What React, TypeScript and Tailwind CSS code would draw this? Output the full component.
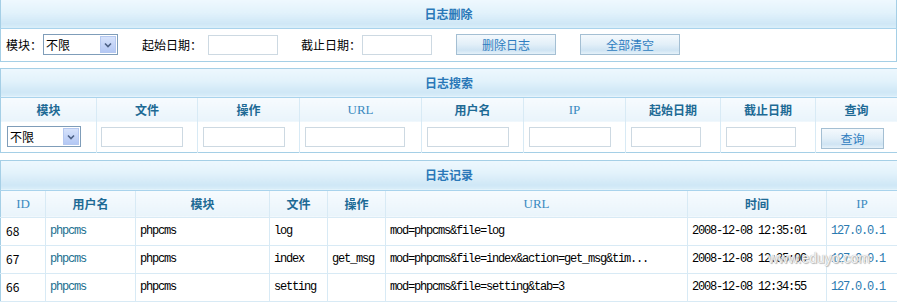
import React from 'react';

const cn = '"Noto Sans CJK SC", "Noto Sans", sans-serif';

// header band gradient used on every table title row
const bandCls =
  'bg-[linear-gradient(to_bottom,#eef8fe_0%,#e2f2fb_45%,#cfe7f6_85%,#d9eef9_100%)] border-b border-[#a9d3ec] text-center font-bold text-[12px] text-[#2a78b8]';
const colHeadCls =
  'bg-[linear-gradient(to_bottom,#f7fbfe,#e9f4fb)] border-r border-[#d8eaf5] text-center font-bold text-[12px] text-[#1d6a95]';
const latinHead = 'font-["Liberation_Serif"] font-normal text-[13px] text-[#3a8ac0]';

const Select: React.FC<{ w: string }> = ({ w }) => (
  <div className={`${w} h-[21px] flex items-center border border-[#7f9db9] bg-white pl-[2px] pr-[1px]`}>
    <span className="flex-1 text-[12px] text-black leading-none">不限</span>
    <span className="w-[16px] h-[17px] flex items-center justify-center bg-[linear-gradient(to_bottom,#d6e2fb,#b4c8f4)] border border-[#b5c8f0]">
      <svg width="8" height="6" viewBox="0 0 8 6">
        <path d="M1 1.5 L4 4.5 L7 1.5" fill="none" stroke="#4d6185" strokeWidth="1.6" />
      </svg>
    </span>
  </div>
);

const Input: React.FC<{ w: string }> = ({ w }) => (
  <div className={`${w} h-[20px] border border-[#cdd9e2] bg-white`} />
);

const Btn: React.FC<{ w: string; children: React.ReactNode }> = ({ w, children }) => (
  <button
    className={`${w} h-[21px] border border-[#a4bfd3] bg-[linear-gradient(to_bottom,#f4f9fd_0%,#e2eff8_50%,#cfe4f3_80%,#e5f1f9_100%)] text-[12px] text-[#2f7dc0] leading-none`}
  >
    {children}
  </button>
);

const searchCols = [
  { label: '模块', w: 'w-[96px]', latin: false },
  { label: '文件', w: 'w-[101px]', latin: false },
  { label: '操作', w: 'w-[102px]', latin: false },
  { label: 'URL', w: 'w-[122px]', latin: true },
  { label: '用户名', w: 'w-[102px]', latin: false },
  { label: 'IP', w: 'w-[102px]', latin: true },
  { label: '起始日期', w: 'w-[95px]', latin: false },
  { label: '截止日期', w: 'w-[95px]', latin: false },
  { label: '查询', w: 'w-[82px]', latin: false },
];

const logCols = [
  { label: 'ID', w: 'w-[45px]', latin: true },
  { label: '用户名', w: 'w-[90px]', latin: false },
  { label: '模块', w: 'w-[134px]', latin: false },
  { label: '文件', w: 'w-[58px]', latin: false },
  { label: '操作', w: 'w-[58px]', latin: false },
  { label: 'URL', w: 'w-[302px]', latin: true },
  { label: '时间', w: 'w-[139px]', latin: false },
  { label: 'IP', w: 'w-[71px]', latin: true },
];

const logs = [
  { id: '68', user: 'phpcms', mod: 'phpcms', file: 'log', action: '', url: 'mod=phpcms&file=log', time: '2008-12-08 12:35:01', ip: '127.0.0.1' },
  { id: '67', user: 'phpcms', mod: 'phpcms', file: 'index', action: 'get_msg', url: 'mod=phpcms&file=index&action=get_msg&tim...', time: '2008-12-08 12:35:00', ip: '127.0.0.1' },
  { id: '66', user: 'phpcms', mod: 'phpcms', file: 'setting', action: '', url: 'mod=phpcms&file=setting&tab=3', time: '2008-12-08 12:34:55', ip: '127.0.0.1' },
];

const cell =
  'border-r border-b border-[#d8eaf5] pl-[4px] font-["Liberation_Mono"] text-[12px] tracking-[-1.2px] whitespace-nowrap';

const App: React.FC = () => {
  return (
    <div className="relative w-[897px] h-[303px] bg-white overflow-hidden" style={{ fontFamily: cn }}>
      {/* 日志删除 */}
      <table className="w-full table-fixed border-collapse border-x border-b border-[#a5cfe6]">
        <tbody>
          <tr className="h-[28px]">
            <td className={bandCls}>日志删除</td>
          </tr>
          <tr className="h-[33px]">
            <td className="p-0">
              <div className="flex items-center pl-[5px] text-[12px] text-black">
                <span className="w-[36px]">模块：</span>
                <span className="ml-[1px]"><Select w="w-[75px]" /></span>
                <span className="ml-[24px] w-[60px]">起始日期：</span>
                <span className="ml-[6px]"><Input w="w-[70px]" /></span>
                <span className="ml-[23px] w-[60px]">截止日期：</span>
                <span className="ml-[1px]"><Input w="w-[70px]" /></span>
                <span className="ml-[24px]"><Btn w="w-[100px]">删除日志</Btn></span>
                <span className="ml-[24px]"><Btn w="w-[100px]">全部清空</Btn></span>
              </div>
            </td>
          </tr>
        </tbody>
      </table>

      {/* 日志搜索 */}
      <table className="mt-[6px] w-full table-fixed border-collapse border border-[#a5cfe6]">
        <colgroup>
          {searchCols.map((c) => (
            <col key={c.label} className={c.w} />
          ))}
        </colgroup>
        <tbody>
          <tr className="h-[29px]">
            <td colSpan={9} className={bandCls}>日志搜索</td>
          </tr>
          <tr className="h-[25px]">
            {searchCols.map((c) => (
              <td key={c.label} className={`${colHeadCls} ${c.latin ? latinHead : ''}`}>{c.label}</td>
            ))}
          </tr>
          <tr className="h-[30px]">
            <td className="border-r border-[#d8eaf5] pl-[6px]"><Select w="w-[74px]" /></td>
            <td className="border-r border-[#d8eaf5] pl-[4px]"><Input w="w-[82px]" /></td>
            <td className="border-r border-[#d8eaf5] pl-[5px]"><Input w="w-[82px]" /></td>
            <td className="border-r border-[#d8eaf5] pl-[5px]"><Input w="w-[100px]" /></td>
            <td className="border-r border-[#d8eaf5] pl-[5px]"><Input w="w-[82px]" /></td>
            <td className="border-r border-[#d8eaf5] pl-[5px]"><Input w="w-[82px]" /></td>
            <td className="border-r border-[#d8eaf5] pl-[5px]"><Input w="w-[70px]" /></td>
            <td className="border-r border-[#d8eaf5] pl-[5px]"><Input w="w-[70px]" /></td>
            <td className="pl-[5px]"><Btn w="w-[63px]">查询</Btn></td>
          </tr>
        </tbody>
      </table>

      {/* 日志记录 */}
      <table className="mt-[7px] w-full table-fixed border-collapse border border-[#a5cfe6]">
        <colgroup>
          {logCols.map((c) => (
            <col key={c.label + c.w} className={c.w} />
          ))}
        </colgroup>
        <tbody>
          <tr className="h-[30px]">
            <td colSpan={8} className={bandCls}>日志记录</td>
          </tr>
          <tr className="h-[27px]">
            {logCols.map((c) => (
              <td key={c.label + c.w} className={`${colHeadCls} border-b ${c.latin ? latinHead : ''}`}>{c.label}</td>
            ))}
          </tr>
          {logs.map((r) => (
            <tr key={r.id} className="h-[28px]">
              <td className="border-r border-b border-[#d8eaf5] pl-[5px] text-[12px] text-black">{r.id}</td>
              <td className={`${cell} text-[#1b6f8f]`}>{r.user}</td>
              <td className={`${cell} text-black`}>{r.mod}</td>
              <td className={`${cell} text-black`}>{r.file}</td>
              <td className={`${cell} text-black`}>{r.action}</td>
              <td className={`${cell} text-black`}>{r.url}</td>
              <td className={`${cell} text-black`}>{r.time}</td>
              <td className={`${cell} text-[#2b7ab0]`}>{r.ip}</td>
            </tr>
          ))}
        </tbody>
      </table>

      {/* watermark */}
      <span className="absolute left-[768px] top-[251px] text-[14px] leading-none font-['Liberation_Sans'] text-[#f4f4f4] [text-shadow:0_0_1px_#9a9a9a,1px_1px_1px_#b8b8b8] pointer-events-none">
        www.eduyo.com
      </span>
    </div>
  );
};

export default App;
